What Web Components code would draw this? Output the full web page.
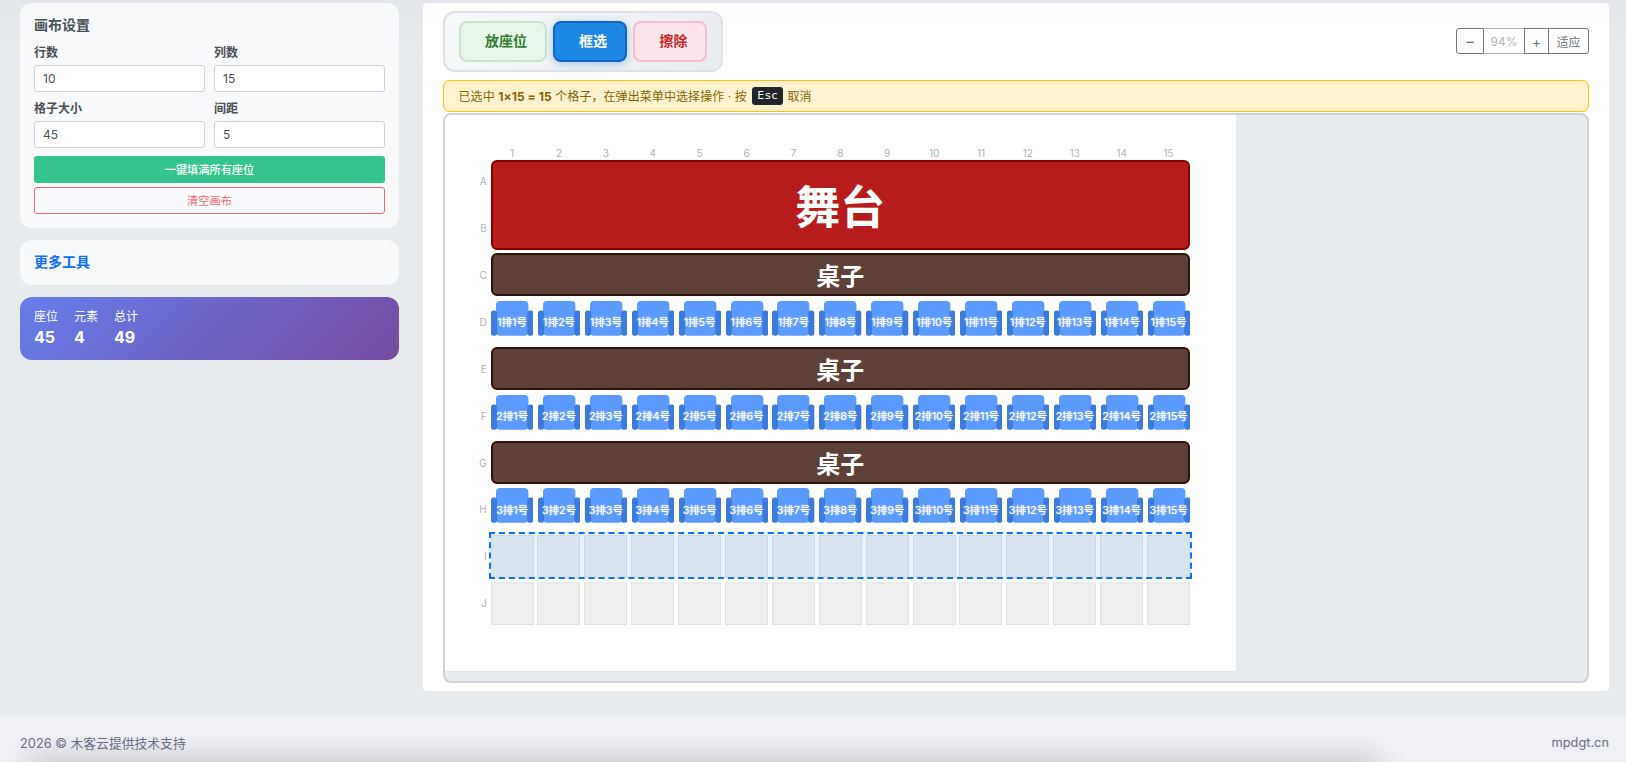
<!DOCTYPE html>
<html lang="zh-CN">
<head>
<meta charset="utf-8">
<title>座位编辑器</title>
<style>
  html, body { margin: 0; height: 100%; overflow: hidden; }
  body {
    display: flex; flex-direction: column; height: 100vh;
    background: linear-gradient(180deg, #e3e7eb 0, #e9ecef 60px);
    font-family: Inter, "Noto Sans CJK SC", sans-serif;
    color: #495057;
  }
  .layout { flex: 1; min-height: 0; display: flex; gap: 24px; padding: 3px 17px 24px 20px; }
  .side { width: 379px; flex: none; display: flex; flex-direction: column; gap: 12px; }
  .main {
    flex: 1; min-width: 0; background: linear-gradient(180deg, #fcfcfd 0, #fff 30px); border-radius: 4px;
    padding: 8px 20px 8px; display: flex; flex-direction: column;
  }
  .tools { display: flex; justify-content: space-between; align-items: flex-start; }
  .grid2 { display: grid; grid-template-columns: 1fr 1fr; gap: 9.4px 9px; }
</style>
</head>
<body>
<div class="layout">
  <div class="side">
    <side-panel heading="画布设置">
      <div class="grid2">
        <num-field label="行数" value="10"></num-field>
        <num-field label="列数" value="15"></num-field>
        <num-field label="格子大小" value="45"></num-field>
        <num-field label="间距" value="5"></num-field>
      </div>
      <wide-button kind="fill">一键填满所有座位</wide-button>
      <wide-button kind="clear">清空画布</wide-button>
    </side-panel>
    <side-panel heading="更多工具" link></side-panel>
    <stat-card></stat-card>
  </div>
  <div class="main">
    <div class="tools">
      <tool-group>
        <tool-button kind="seat">放座位</tool-button>
        <tool-button kind="select">框选</tool-button>
        <tool-button kind="erase">擦除</tool-button>
      </tool-group>
      <zoom-bar></zoom-bar>
    </div>
    <select-notice>已选中 <b>1×15 = 15</b> 个格子，在弹出菜单中选择操作 · 按 <kbd slot="key">Esc</kbd></select-notice>
    <seat-canvas></seat-canvas>
  </div>
</div>
<page-footer></page-footer>

<script>
class SidePanel extends HTMLElement {
    constructor() {
        super();
        this.attachShadow({mode: 'open'});
        const link = this.hasAttribute('link');
        this.shadowRoot.innerHTML = `
            <style>
                :host { display: block; background: #f8f9fa; border-radius: 12px; padding: 13px 14px 14px; box-sizing: border-box; }
                h3 { margin: 0; font-size: 14px; line-height: 17px; font-weight: 700; color: ${link ? '#0d6efd' : '#495057'}; }
                .body { display: flex; flex-direction: column; gap: 4px; margin-top: 12px; }
            </style>
            <h3>${this.getAttribute('heading')}</h3>
            ${link ? '' : '<div class="body"><slot></slot></div>'}
        `;
        if (link) this.style.paddingBottom = '15px';
    }
}

class NumField extends HTMLElement {
    constructor() {
        super();
        this.attachShadow({mode: 'open'});
        this.shadowRoot.innerHTML = `
            <style>
                :host { display: block; }
                label { display: block; font-size: 12px; line-height: 16px; font-weight: 600; color: #495057; margin-bottom: 4px; }
                input {
                    display: block; width: 100%; height: 26.6px; box-sizing: border-box;
                    border: 1px solid #ced4da; border-radius: 3px; background: #fff;
                    padding: 0 8px; font: 400 12px Inter, "Noto Sans CJK SC", sans-serif; color: #495057;
                }
            </style>
            <label>${this.getAttribute('label')}</label>
            <input type="text" value="${this.getAttribute('value')}">
        `;
    }
}

class WideButton extends HTMLElement {
    constructor() {
        super();
        this.attachShadow({mode: 'open'});
        const fill = this.getAttribute('kind') === 'fill';
        this.shadowRoot.innerHTML = `
            <style>
                :host {
                    display: flex; align-items: center; justify-content: center;
                    height: 27px; box-sizing: border-box; border-radius: 3px; font-size: 11.2px;
                    ${fill ? 'background: #34c58e; color: #fff; font-weight: 500; margin-top: 4px;'
                           : 'border: 1px solid #ee6a70; color: #ee6a70;'}
                }
            </style>
            <slot></slot>
        `;
    }
}

class StatCard extends HTMLElement {
    constructor() {
        super();
        this.attachShadow({mode: 'open'});
        const stats = [['座位', '45'], ['元素', '4'], ['总计', '49']];
        this.shadowRoot.innerHTML = `
            <style>
                :host {
                    display: flex; gap: 16px; height: 63px; box-sizing: border-box; padding: 12px 14px;
                    border-radius: 12px; color: #fff; background: linear-gradient(135deg, #667eea 0%, #764ba2 100%);
                }
                div { min-width: 24px; }
                span { display: block; font-size: 12px; line-height: 16px; }
                b { display: block; font-size: 16px; line-height: 24px; font-weight: 700; margin-top: 0; }
            </style>
            ${stats.map(s => `<div><span>${s[0]}</span><b>${s[1]}</b></div>`).join('')}
        `;
    }
}

class ToolGroup extends HTMLElement {
    constructor() {
        super();
        this.attachShadow({mode: 'open'});
        this.shadowRoot.innerHTML = `
            <style>
                :host {
                    display: inline-flex; gap: 6px; padding: 8px 14px; border: 2px solid #dee2e6; border-radius: 12px;
                    background: linear-gradient(135deg, #f8f9fa, #e9ecef);
                }
            </style>
            <slot></slot>
        `;
    }
}

class ToolButton extends HTMLElement {
    constructor() {
        super();
        this.attachShadow({mode: 'open'});
        const looks = {
            seat: 'width:88px; padding-left:6px; background:#e8f5e9; border-color:#c8e6c9; color:#2e7d32;',
            select: 'width:74px; padding-left:6px; background:#1e88e5; border-color:#1565c0; color:#fff; box-shadow:0 2px 8px rgba(30,136,229,.4);',
            erase: 'width:74px; padding-left:7px; background:#fce4ec; border-color:#f8bbd0; color:#c62828;'
        };
        this.shadowRoot.innerHTML = `
            <style>
                :host {
                    display: flex; align-items: center; justify-content: center; box-sizing: border-box;
                    height: 41px; padding-bottom: 3px; border: 2px solid; border-radius: 8px; font-size: 14px; font-weight: 700;
                    ${looks[this.getAttribute('kind')]}
                }
            </style>
            <slot></slot>
        `;
    }
}

class ZoomBar extends HTMLElement {
    constructor() {
        super();
        this.attachShadow({mode: 'open'});
        this.shadowRoot.innerHTML = `
            <style>
                :host { display: inline-flex; height: 26px; margin-top: 17px; font-size: 12px; color: #6c757d; }
                span {
                    display: flex; align-items: center; justify-content: center; box-sizing: border-box;
                    border: 1px solid #70748a; margin-left: -1px;
                }
                .minus { width: 28px; border-radius: 3px 0 0 3px; margin-left: 0; font-size: 16px; }
                .pct { width: 42px; color: #adb5bd; border-color: #b5b3c2; border-left-color: #70748a; border-right-color: #70748a; }
                .plus { width: 25px; font-size: 14px; }
                .fit { width: 41px; border-radius: 0 3px 3px 0; }
            </style>
            <span class="minus">−</span><span class="pct">94%</span><span class="plus">+</span><span class="fit">适应</span>
        `;
    }
}

class SelectNotice extends HTMLElement {
    constructor() {
        super();
        this.attachShadow({mode: 'open'});
        this.shadowRoot.innerHTML = `
            <style>
                :host {
                    display: flex; align-items: center; height: 32px; box-sizing: border-box;
                    margin-top: 8px; padding-left: 14.5px; background: #fff3cd; border: 1px solid #ffc107;
                    border-radius: 6px; font-size: 12px; color: #856404; white-space: pre; letter-spacing: .08px;
                }
                ::slotted(kbd) {
                    display: inline-block; background: #212529; color: #fff; border-radius: 3px;
                    font: 11px/18px "DejaVu Sans", sans-serif; padding: 0 5px; letter-spacing: .8px;
                }
                .text { padding-bottom: 2px; }
                .key { margin: 0 4px 0 2px; display: inline-flex; }
            </style>
            <span class="text"><slot></slot></span><span class="key"><slot name="key"></slot></span><span class="text">取消</span>
        `;
    }
}

class SeatCell extends HTMLElement {
    constructor() {
        super();
        this.attachShadow({mode: 'open'});
        this.shadowRoot.innerHTML = `
            <style>
                :host { display: grid; place-items: center; position: relative; }
                svg { position: absolute; left: .5px; top: .5px; width: 42.3px; height: 35px; }
                span {
                    position: relative; font-size: 10.6px; font-weight: 500; letter-spacing: -.1px; color: #fff; white-space: nowrap;
                    text-shadow: 0 0 2px rgba(255,255,255,.5);
                }
            </style>
            <svg viewBox="0 0 42.3 35" aria-hidden="true">
                <rect x="5" y="0" width="32.4" height="34.8" rx="4" fill="#5b9bff"/>
                <rect x="0" y="9.5" width="6" height="25.3" rx="2.5" fill="#3a7bdc"/>
                <rect x="36.3" y="9.5" width="6" height="25.3" rx="2.5" fill="#3a7bdc"/>
            </svg>
            <span>${this.getAttribute('label')}</span>
        `;
    }
}

class SeatCanvas extends HTMLElement {
    constructor() {
        super();
        this.attachShadow({mode: 'open'});
        const rows = 'ABCDEFGHIJ'.split('');
        let html = '';
        for (let c = 1; c <= 15; c++) html += `<span class="col" style="grid-column:${c + 1};grid-row:1">${c}</span>`;
        rows.forEach((r, i) => {
            html += `<span class="row" style="grid-column:1;grid-row:${i + 2}">${r}</span>`;
        });
        html += '<div class="stage" style="grid-column:2/-1;grid-row:2/span 2">舞台</div>';
        [4, 6, 8].forEach((row, n) => {
            html += `<div class="desk" style="grid-column:2/-1;grid-row:${row}">桌子</div>`;
            for (let c = 1; c <= 15; c++) {
                html += `<seat-cell style="grid-column:${c + 1};grid-row:${row + 1}" label="${n + 1}排${c}号"></seat-cell>`;
            }
        });
        [10, 11].forEach(row => {
            for (let c = 1; c <= 15; c++) html += `<div class="empty" style="grid-column:${c + 1};grid-row:${row}"></div>`;
        });
        html += '<div class="marquee" style="grid-column:2/-1;grid-row:10"></div>';
        this.shadowRoot.innerHTML = `
            <style>
                :host {
                    display: block; flex: 1; min-height: 0; margin-top: 1px; box-sizing: border-box;
                    border: 2px solid #ced4da; border-radius: 8px; background: #e9ecef; overflow: hidden;
                }
                .sheet { width: 791px; height: 556px; background: #fff; box-sizing: border-box; padding: 29.8px 0 0 21.7px; }
                .grid {
                    display: grid; grid-template-columns: 20px repeat(15, 43px);
                    grid-template-rows: 11px repeat(10, 43px); gap: 3.9px;
                }
                .col { font-size: 10px; line-height: 11px; margin-top: 3.5px; text-align: center; color: #adb5bd; }
                .row { font-size: 10px; align-self: center; text-align: right; color: #adb5bd; }
                .stage, .desk {
                    display: flex; align-items: center; justify-content: center; box-sizing: border-box;
                    border: 2px solid; border-radius: 6px; color: #fff; font-weight: 700;
                }
                .stage { background: #b71c1c; border-color: #7f0000; font-size: 45px; }
                .desk { background: #5d4037; border-color: #2f130a; font-size: 24px; }
                .empty { background: #efefef; border: 1px solid #e3e3e3; box-sizing: border-box; }
                .marquee {
                    margin: -2.7px -1.7px -1.3px -1.7px; border: 2px dashed #0d6efd;
                    background: rgba(13,110,253,.09);
                }
            </style>
            <div class="sheet"><div class="grid">${html}</div></div>
        `;
    }
}

class PageFooter extends HTMLElement {
    constructor() {
        super();
        this.attachShadow({mode: 'open'});
        this.shadowRoot.innerHTML = `
            <style>
                :host {
                    display: flex; justify-content: space-between; align-items: center; flex: none;
                    height: 47px; padding: 8px 17px 0 20px; box-sizing: border-box; overflow: hidden; position: relative;
                    background: #f0f1f4; font-size: 12.8px; color: #6b6d85;
                }
                :host::after {
                    content: ""; position: absolute; left: 30px; right: 250px; bottom: -14px; height: 12px;
                    box-shadow: 0 0 30px 2px rgba(0,0,0,.3);
                }
                span { position: relative; z-index: 1; }
            </style>
            <span>2026 © 木客云提供技术支持</span><span>mpdgt.cn</span>
        `;
    }
}

customElements.define('side-panel', SidePanel);
customElements.define('num-field', NumField);
customElements.define('wide-button', WideButton);
customElements.define('stat-card', StatCard);
customElements.define('tool-group', ToolGroup);
customElements.define('tool-button', ToolButton);
customElements.define('zoom-bar', ZoomBar);
customElements.define('select-notice', SelectNotice);
customElements.define('seat-cell', SeatCell);
customElements.define('seat-canvas', SeatCanvas);
customElements.define('page-footer', PageFooter);
</script>
</body>
</html>
